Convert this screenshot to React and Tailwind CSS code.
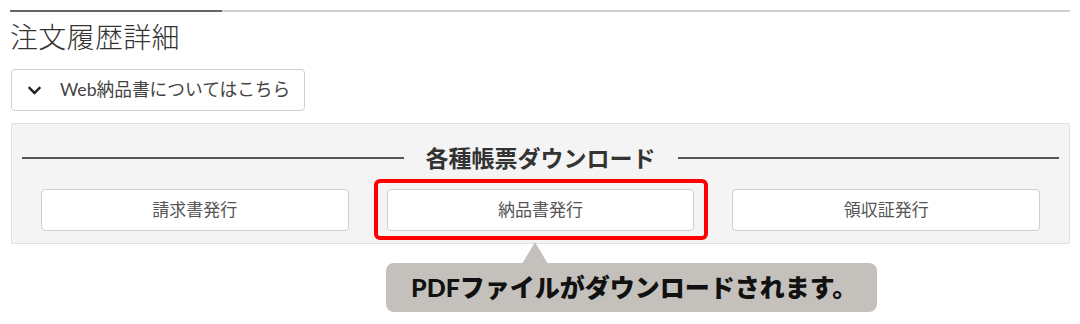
import { FaChevronDown } from 'react-icons/fa'

const font = { fontFamily: 'Lato, "Noto Sans CJK JP", sans-serif' }

function IssueButton({ label }) {
  return (
    <button className="h-[42px] w-full rounded-[4px] border border-[#cfcfcf] bg-white text-[17px] text-[#555]">
      {label}
    </button>
  )
}

export default function App() {
  return (
    <div className="w-[1080px] h-[324px] bg-white px-[10px] pt-[10px] overflow-hidden" style={font}>
      {/* top rule */}
      <div className="flex h-[2px]">
        <div className="w-[212px] bg-[#666]" />
        <div className="flex-1 bg-[#cfcfcf]" />
      </div>

      <h1 className="mt-[5px] text-[28px] leading-[40px] font-light text-[#333] tracking-[0.3px]">注文履歴詳細</h1>

      <button className="mt-[12px] ml-px flex h-[42px] w-[294px] items-center rounded-[4px] border border-[#cfcfcf] bg-white text-[#444]">
        <FaChevronDown className="ml-[15px] h-[15px] w-[15px] text-[#222]" />
        <span className="ml-[18px] text-[17.7px]">Web納品書についてはこちら</span>
      </button>

      <div className="mt-[12px] ml-px h-[121px] rounded-[2px] border border-[#e0e0e0] bg-[#f4f4f4]">
        <div className="mt-[20px] flex items-center gap-[22px] px-[10px]">
          <div className="h-[2px] flex-1 bg-[#555]" />
          <span className="text-[23px] font-bold text-[#333] leading-[28px]">各種帳票ダウンロード</span>
          <div className="h-[2px] flex-1 bg-[#555]" />
        </div>
        <div className="mt-[17px] grid grid-cols-3 gap-[38px] px-[29px]">
          <IssueButton label="請求書発行" />
          <div className="relative">
            <IssueButton label="納品書発行" />
            <div className="absolute -left-[13px] -right-[14px] -top-[10px] -bottom-[9px] rounded-[6px] border-[4px] border-[#f00]" />
          </div>
          <IssueButton label="領収証発行" />
        </div>
      </div>

      <div className="relative ml-[376px] mt-[19px] flex h-[49px] w-[491px] items-center rounded-[8px] bg-[#c4c1bc] pl-[25px]">
        <div className="absolute -top-[21px] left-[136px] h-0 w-0 border-x-[13px] border-b-[22px] border-x-transparent border-b-[#c4c1bc]" />
        <span className="text-[25px] font-black text-[#111]">PDFファイルがダウンロードされます。</span>
      </div>
    </div>
  )
}
